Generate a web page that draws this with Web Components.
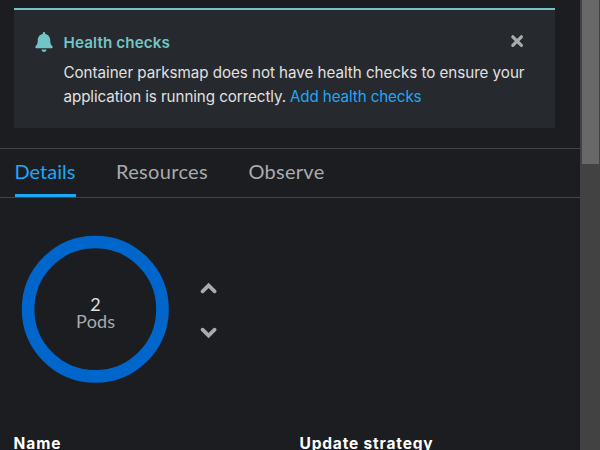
<!DOCTYPE html>
<html lang="en"><head><meta charset="utf-8"><title>Deployment details</title>
<style>
html,body{margin:0;height:100%;overflow:hidden;background:#1b1d21}
body{font-family:Inter,"Noto Sans",sans-serif;color:#e0e0e0}
</style></head><body>
<side-panel>
  <hint-alert heading="Health checks">
    <fit-text width="461">Container parksmap does not have health checks to ensure your</fit-text><br>
    <fit-text width="222.5">application is running correctly.</fit-text><fit-text class="link" width="131.5" style="color:#1fa7f8;margin-left:4px">Add health checks</fit-text>
  </hint-alert>
  <tab-bar>
    <tab-item active><fit-text width="61">Details</fit-text></tab-item>
    <tab-item><fit-text width="92">Resources</fit-text></tab-item>
    <tab-item><fit-text width="76">Observe</fit-text></tab-item>
  </tab-bar>
  <pod-scaler count="2" label="Pods"></pod-scaler>
  <detail-heads><fit-text width="48">Name</fit-text><fit-text width="134">Update strategy</fit-text></detail-heads>
</side-panel>
<script>
// Text run that spreads its letter spacing to reach a set width.
class FitText extends HTMLElement{
  constructor(){super();this.attachShadow({mode:'open'}).innerHTML='<style>:host{display:inline-block;white-space:nowrap}span{display:inline-block}</style><span><slot></slot></span>'}
  connectedCallback(){
    const s=this.shadowRoot.querySelector('span'),w=+this.getAttribute('width');
    this.style.width=w+'px';
    s.style.letterSpacing=(w-s.getBoundingClientRect().width)/this.textContent.length+'px';
  }
}
class SidePanel extends HTMLElement{
  constructor(){super();this.attachShadow({mode:'open'}).innerHTML=`<style>
    :host{display:flex;width:600px;height:450px;overflow:hidden;background:#1b1d21}
    main{width:580px;height:450px;overflow:hidden;display:flex;flex-direction:column}
    .track{width:20px;background:#424242;box-sizing:border-box;padding:0 1px 0 2px}
    .thumb{height:164px;background:#686868}
    </style><main><slot></slot></main><div class="track"><div class="thumb"></div></div>`}
}
class HintAlert extends HTMLElement{
  constructor(){super();this.attachShadow({mode:'open'}).innerHTML=`<style>
    :host{display:grid;grid-template-columns:29px 1fr 16px;margin:8px 25px 20px 14px;height:120px;flex:none;box-sizing:border-box;
      border-top:2px solid #73c5c5;background:#26292d;padding:20px 30px 0 20.5px;grid-template-rows:30px auto;font-size:15.2px;line-height:24px}
    .bell{width:18px;height:20px;margin-top:2px}
    .title{color:#73c5c5;font-weight:600;padding-top:1px}
    .close{width:14px;height:14px;margin:4px 0 0 -13px}
    .body{grid-column:2/4;white-space:normal;width:475px;margin-top:1px}
    </style><svg class="bell" viewBox="0 0 448 512"><path fill="#73c5c5" d="M224 512c35 0 64-29 64-64H160c0 35 29 64 64 64zm215-150c-19-21-55-52-55-154 0-78-55-140-128-155V32a32 32 0 0 0-64 0v21C119 68 64 130 64 208c0 102-36 133-55 154-6 6-9 14-9 22 0 16 13 32 32 32h384c19 0 32-16 32-32 0-8-3-16-9-22z"/></svg>
    <div class="title"></div>
    <svg class="close" viewBox="0 0 14 14"><path d="M2.8 2.8l8.6 8.6M11.4 2.8l-8.6 8.6" stroke="#aaabac" stroke-width="3.2" stroke-linecap="round"/></svg>
    <div class="body"><slot></slot></div>`}
  connectedCallback(){const f=document.createElement('fit-text');f.setAttribute('width','106.5');f.textContent=this.getAttribute('heading');this.shadowRoot.querySelector('.title').append(f)}
}
class TabBar extends HTMLElement{
  constructor(){super();this.attachShadow({mode:'open'}).innerHTML=`<style>
    :host{display:flex;flex:none;height:50px;box-sizing:border-box;border:solid #444548;border-width:1px 0;padding-left:14.5px;gap:40.5px;font:20px/30px Lato,sans-serif}
    </style><slot></slot>`}
}
class TabItem extends HTMLElement{
  constructor(){super();this.attachShadow({mode:'open'}).innerHTML=`<style>
    :host{display:block;box-sizing:border-box;height:48px;padding-top:7px;color:#aaabac}
    :host([active]){color:#1fa7f8;border-bottom:3px solid #1fa7f8}
    </style><slot></slot>`}
}
class PodScaler extends HTMLElement{
  constructor(){super();this.attachShadow({mode:'open'}).innerHTML=`<style>
    :host{display:flex;flex:none;height:234px;box-sizing:border-box;padding:37px 0 0 21px}
    .donut{width:149px;height:149px}
    text{font-family:Lato,sans-serif;font-size:18px;text-anchor:middle}
    .arrows{display:flex;flex-direction:column;gap:28px;margin:45px 0 0 30px}
    .arrows svg{width:17px;height:16px}
    </style><svg class="donut" viewBox="0 0 149 149"><circle cx="74.3" cy="74.2" r="67.2" fill="none" stroke="#06c" stroke-width="12.6"/>
    <text x="74.4" y="76" fill="#e0e0e0">${this.getAttribute('count')}</text><text x="74.6" y="93" fill="#aaabac" textLength="39">${this.getAttribute('label')}</text></svg>
    <div class="arrows"><svg viewBox="0 0 17 16"><path d="M2.6 11.4l6-6 6 6" fill="none" stroke="#aaabac" stroke-width="3.7" stroke-linecap="round"/></svg>
    <svg viewBox="0 0 17 16"><path d="M2.6 5.6l6 6 6-6" fill="none" stroke="#aaabac" stroke-width="3.7" stroke-linecap="round"/></svg></div>`}
}
class DetailHeads extends HTMLElement{
  constructor(){super();this.attachShadow({mode:'open'}).innerHTML=`<style>
    :host{display:grid;flex:none;grid-template-columns:286px 1fr;padding-left:13.5px;font-size:15.5px;line-height:24px;font-weight:700;color:#fff}
    </style><slot></slot>`}
}
customElements.define('fit-text',FitText);
customElements.define('side-panel',SidePanel);
customElements.define('hint-alert',HintAlert);
customElements.define('tab-bar',TabBar);
customElements.define('tab-item',TabItem);
customElements.define('pod-scaler',PodScaler);
customElements.define('detail-heads',DetailHeads);
// Widths depend on inherited fonts, so measure again once every element is upgraded.
const refit=r=>r.querySelectorAll('*').forEach(e=>{
  if(e instanceof FitText){e.shadowRoot.querySelector('span').style.letterSpacing='0';e.connectedCallback()}
  if(e.shadowRoot)refit(e.shadowRoot);
});
refit(document);
</script></body></html>
